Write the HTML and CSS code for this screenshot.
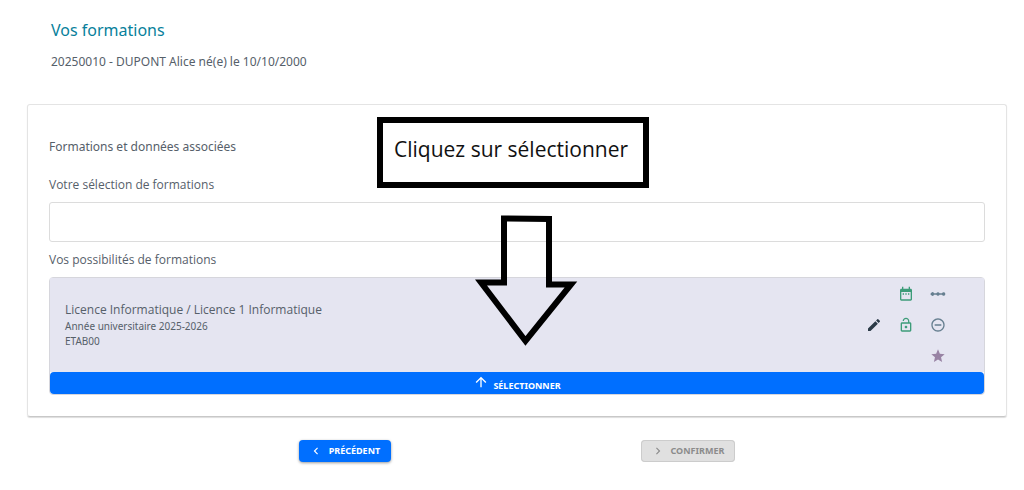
FILE: index.html
```html
<!DOCTYPE html>
<html lang="fr">
<head>
<meta charset="utf-8">
<meta name="viewport" content="width=device-width, initial-scale=1">
<title>Vos formations</title>
<link rel="stylesheet" href="styles.css">
</head>
<body>
<main class="page">
  <header class="page-header">
    <h1 class="page-title">Vos formations</h1>
    <p class="student">20250010 - DUPONT Alice né(e) le 10/10/2000</p>
  </header>

  <section class="card">
    <h2 class="label label-section">Formations et données associées</h2>
    <h3 class="label label-list">Votre sélection de formations</h3>
    <div class="selection"></div>
    <h3 class="label label-list">Vos possibilités de formations</h3>
    <article class="choice">
      <div class="choice-body">
        <div class="choice-text">
          <p class="choice-name">Licence Informatique / Licence 1 Informatique</p>
          <p class="choice-detail">Année universitaire 2025-2026</p>
          <p class="choice-detail">ETAB00</p>
        </div>
        <div class="choice-icons">
          <svg class="icon edit" viewBox="0 0 24 24"><path d="M3 17.25V21h3.75L17.81 9.94l-3.75-3.75L3 17.25zM20.71 7.04a1 1 0 0 0 0-1.41l-2.34-2.34a1 1 0 0 0-1.41 0l-1.83 1.83 3.75 3.75 1.83-1.83z"/></svg>
          <div class="icon-column">
            <svg class="icon green" viewBox="0 0 24 24"><path d="M9 11H7v2h2v-2zm4 0h-2v2h2v-2zm4 0h-2v2h2v-2zm2-7h-1V1h-2v3H8V1H6v3H5c-1.110 0-1.990.9-1.990 2L3 20a2 2 0 0 0 2 2h14c1.100 0 2-.9 2-2V6c0-1.100-.9-2-2-2zm0 16H5V9h14v11z"/></svg>
            <svg class="icon green" viewBox="0 0 24 24"><path d="M12 17c1.100 0 2-.9 2-2s-.9-2-2-2-2 .9-2 2 .9 2 2 2zm6-9h-1V6c0-2.760-2.240-5-5-5S7 3.240 7 6h1.900c0-1.710 1.390-3.100 3.100-3.100s3.100 1.390 3.100 3.100v2H6c-1.100 0-2 .9-2 2v10c0 1.100.9 2 2 2h12c1.100 0 2-.9 2-2V10c0-1.100-.9-2-2-2zm0 12H6V10h12v10z"/></svg>
          </div>
          <div class="icon-column">
            <svg class="icon slate" viewBox="0 0 24 24"><path d="M23 12a2.600 2.600 0 0 1-5 1h-3.600a2.600 2.600 0 0 1-4.800 0H6a2.600 2.600 0 1 1 0-2h3.600a2.600 2.600 0 0 1 4.800 0H18a2.600 2.600 0 0 1 5 1z"/></svg>
            <svg class="icon slate" viewBox="0 0 24 24"><path d="M7 11v2h10v-2H7zm5-9C6.480 2 2 6.480 2 12s4.480 10 10 10 10-4.480 10-10S17.520 2 12 2zm0 18c-4.410 0-8-3.590-8-8s3.590-8 8-8 8 3.590 8 8-3.590 8-8 8z"/></svg>
            <svg class="icon mauve" viewBox="0 0 24 24"><path d="M12 17.270 18.180 21l-1.640-7.030L22 9.240l-7.190-.610L12 2 9.190 8.630 2 9.240l5.460 4.730L5.820 21z"/></svg>
          </div>
        </div>
      </div>
      <button class="button select-button" type="button">
        <svg class="select-arrow" viewBox="0 0 24 24"><path d="m4 12 1.410 1.410L11 7.830V20h2V7.830l5.580 5.590L20 12l-8-8-8 8z"/></svg>
        <span class="select-text">SÉLECTIONNER</span>
      </button>
    </article>
  </section>

  <nav class="actions">
    <button class="button action previous" type="button">
      <svg class="chevron" viewBox="0 0 24 24"><path d="M15.410 7.410 14 6l-6 6 6 6 1.410-1.410L10.830 12z"/></svg>
      PRÉCÉDENT
    </button>
    <button class="button action confirm" type="button" disabled>
      <svg class="chevron" viewBox="0 0 24 24"><path d="M10 6 8.590 7.410 13.170 12l-4.580 4.590L10 18l6-6z"/></svg>
      CONFIRMER
    </button>
  </nav>

  <p class="callout">Cliquez sur sélectionner</p>
  <svg class="callout-arrow" viewBox="0 0 104 132"><path d="M29 3.500 74 4V69.500H96L50.500 126 6 67.500H29Z"/></svg>
</main>
</body>
</html>
```
FILE: styles.css
```css
* {
  box-sizing: border-box;
}

body {
  margin: 0;
  background: #fff;
  color: #56606a;
  font-family: "Noto Sans", "Open Sans", sans-serif;
  font-size: 12px;
}

h1, h2, h3, p {
  margin: 0;
  font-weight: 400;
}

.page {
  position: relative;
  padding: 20px 17px 28px 27px;
}

.page-header {
  padding: 0 24px;
}

.page-title {
  color: #087f9b;
  font-size: 16px;
  line-height: 20px;
}

.student {
  margin-top: 12px;
  line-height: 20px;
}

.card {
  margin-top: 32px;
  padding: 32px 21px 21px;
  border: 1px solid #e4e4e4;
  border-bottom-color: #c8c8c8;
  border-radius: 3px;
  box-shadow: 0 1px 1px #ddd;
}

.label {
  font-size: 12px;
  line-height: 20px;
}

.label-section {
  margin-bottom: 18px;
}

.label-list,
.choice-name {
  font-family: "Open Sans", "Noto Sans", sans-serif;
}

.selection {
  min-height: 40px;
  margin: 7px 0 8px;
  border: 1px solid #dcdcdc;
  border-radius: 3px;
}

.choice {
  margin-top: 7px;
  border: 1px solid #d6d6dc;
  border-radius: 4px;
}

.choice-body {
  display: flex;
  justify-content: space-between;
  align-items: center;
  padding: 0 38px 0 15px;
  background: #e5e5f1;
}

.choice-name {
  font-size: 12px;
  line-height: 18px;
}

.choice-detail {
  font-size: 10px;
  line-height: 15px;
}

.choice-icons {
  display: flex;
  align-items: center;
  gap: 16px;
}

.icon-column {
  display: flex;
  flex-direction: column;
  align-self: flex-start;
  gap: 15px;
  padding: 8px 0;
}

.icon {
  display: block;
  width: 16px;
  height: 16px;
  fill: currentColor;
}

.edit { color: #2c3b48; }
.green { color: #3d9c79; }
.slate { color: #667f90; }
.mauve { color: #9883a4; }

.button {
  border: 0;
  border-radius: 4px;
  background: #006fff;
  color: #fff;
  font-family: inherit;
  font-size: 9px;
  font-weight: 700;
  line-height: 14px;
}

.select-button {
  display: flex;
  justify-content: center;
  align-items: flex-start;
  gap: 4px;
  width: 100%;
  height: 22px;
  padding: 2px;
}

.select-arrow {
  width: 16px;
  height: 16px;
  fill: currentColor;
}

.select-text {
  padding-top: 5px;
}

.actions {
  display: flex;
  justify-content: space-around;
  width: 70%;
  margin: 23px auto 0;
}

.action {
  display: flex;
  align-items: center;
  gap: 6px;
  padding: 4px 11px 4px 10px;
}

.chevron {
  width: 14px;
  height: 14px;
  fill: currentColor;
}

.previous {
  box-shadow: 0 1px 3px rgb(0 0 0 / 40%);
}

.confirm {
  background: #e0e0e0;
  box-shadow: inset 0 0 0 1px #ccc;
  color: #8c8c8c;
}

.callout {
  position: absolute;
  top: 117px;
  left: 377px;
  padding: 11px 15px 17px 11px;
  border: 6px solid #000;
  background: #fff;
  color: #111;
  font-family: "Open Sans", "Noto Sans", sans-serif;
  font-size: 21px;
  line-height: 31px;
}

.callout-arrow {
  position: absolute;
  top: 215px;
  left: 475px;
  width: 104px;
  height: 132px;
  fill: none;
  stroke: #000;
  stroke-width: 6px;
}
```
